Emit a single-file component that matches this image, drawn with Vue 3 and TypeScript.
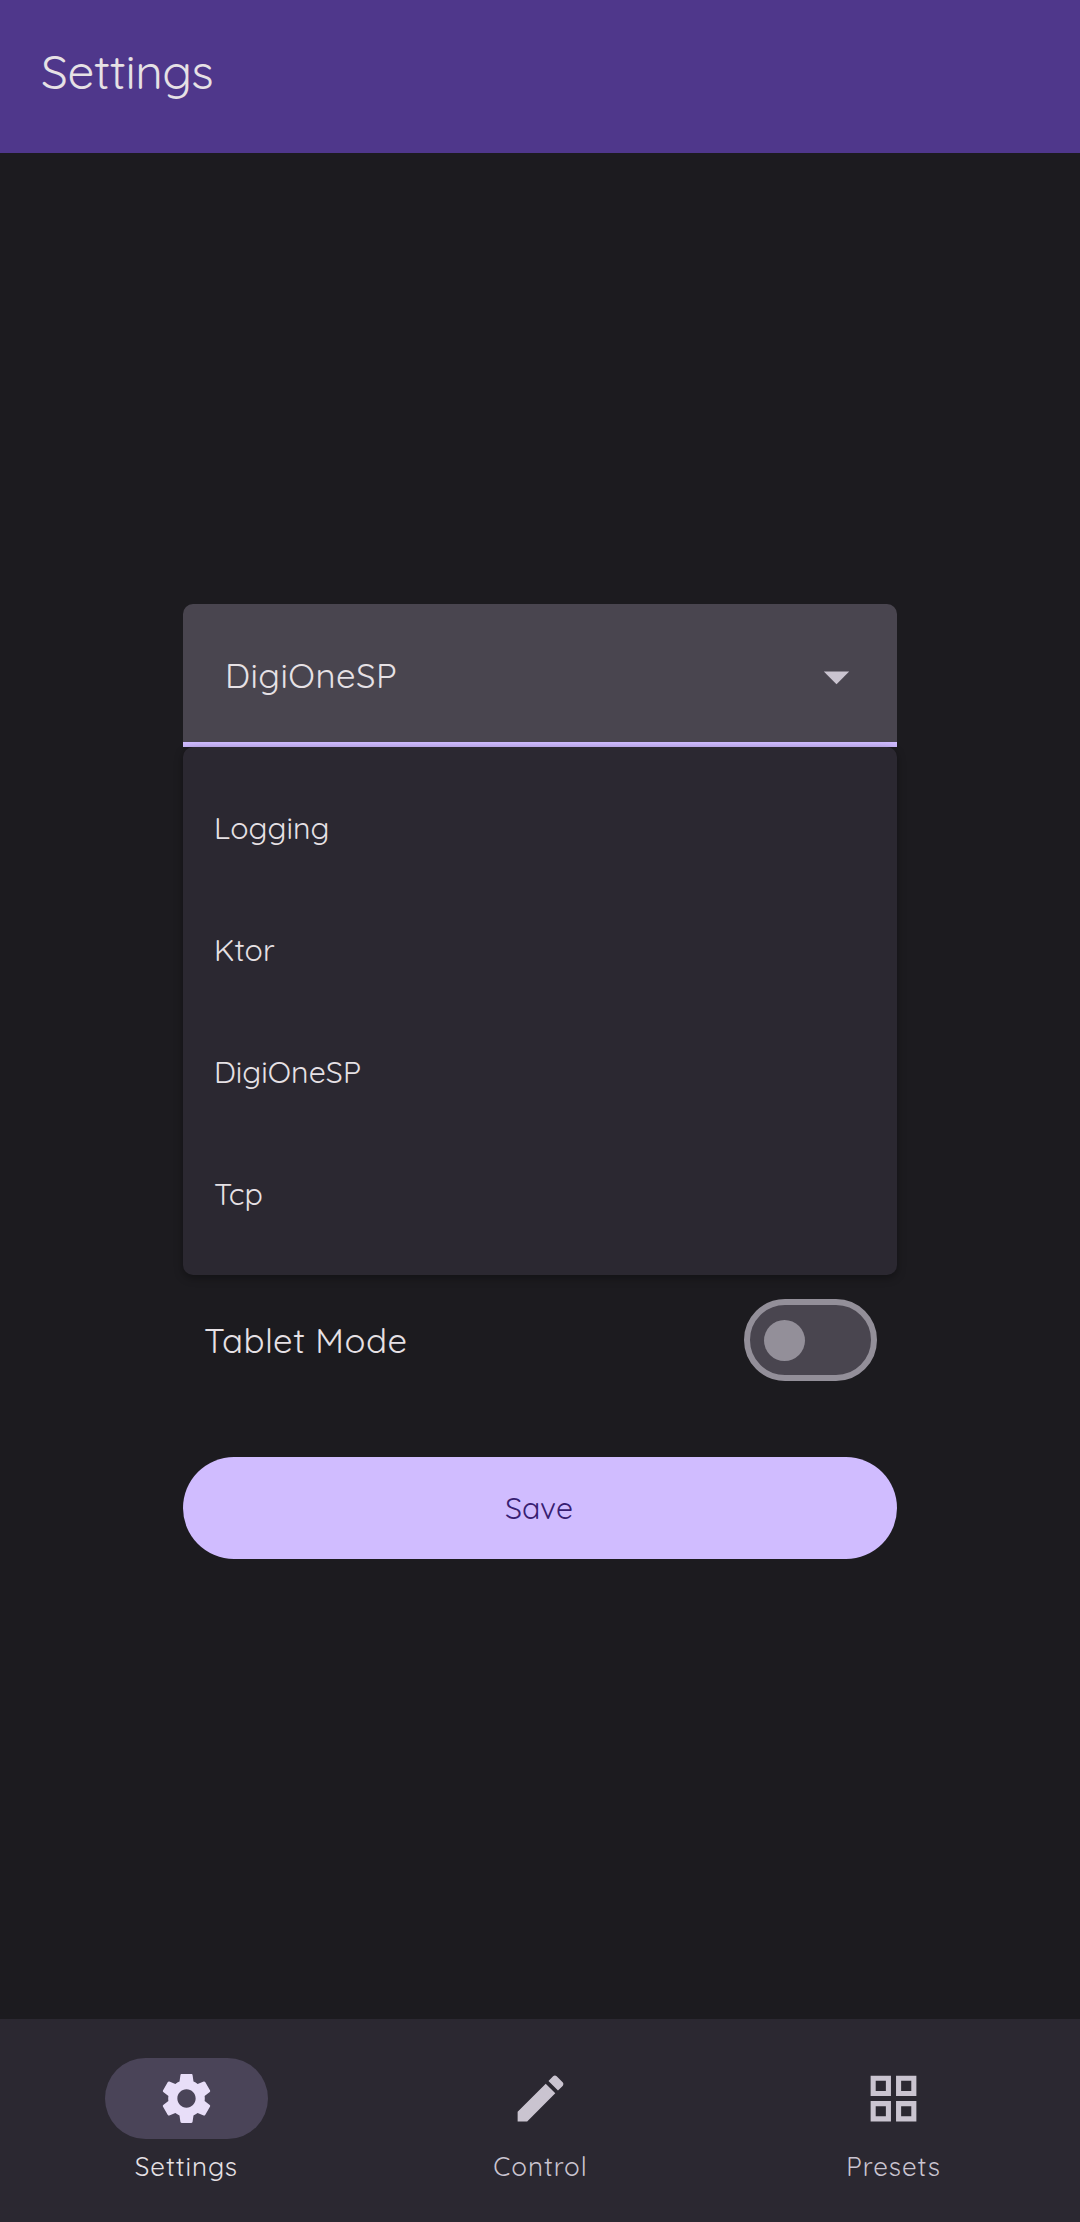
<script setup lang="ts">
interface Option {
  id: string
  label: string
}

interface Destination {
  id: string
  label: string
  icon: string
  active: boolean
}

const selected = 'DigiOneSP'

const options: Option[] = [
  { id: 'logging', label: 'Logging' },
  { id: 'ktor', label: 'Ktor' },
  { id: 'digi', label: 'DigiOneSP' },
  { id: 'tcp', label: 'Tcp' },
]

const destinations: Destination[] = [
  {
    id: 'settings',
    label: 'Settings',
    active: true,
    icon: 'M19.14 12.94c.04-.3.06-.61.06-.94 0-.32-.02-.64-.07-.94l2.03-1.58c.18-.14.23-.41.12-.61l-1.92-3.32c-.12-.22-.37-.29-.59-.22l-2.39.96c-.5-.38-1.03-.7-1.62-.94l-.36-2.54c-.04-.24-.24-.41-.48-.41h-3.84c-.24 0-.43.17-.47.41l-.36 2.54c-.59.24-1.13.57-1.62.94l-2.39-.96c-.22-.08-.47 0-.59.22L2.74 8.87c-.12.21-.08.47.12.61l2.03 1.58c-.05.3-.09.63-.09.94s.02.64.07.94l-2.03 1.58c-.18.14-.23.41-.12.61l1.92 3.32c.12.22.37.29.59.22l2.39-.96c.5.38 1.03.7 1.62.94l.36 2.54c.05.24.24.41.48.41h3.84c.24 0 .44-.17.47-.41l.36-2.54c.59-.24 1.13-.56 1.62-.94l2.39.96c.22.08.47 0 .59-.22l1.92-3.32c.12-.22.07-.47-.12-.61l-2.01-1.58zM12 15.6c-1.98 0-3.6-1.62-3.6-3.6s1.62-3.6 3.6-3.6 3.6 1.62 3.6 3.6-1.62 3.6-3.6 3.6z',
  },
  {
    id: 'control',
    label: 'Control',
    active: false,
    icon: 'M3 17.25V21h3.75L17.81 9.94l-3.75-3.75L3 17.25zM20.71 7.04c.39-.39.39-1.02 0-1.41l-2.34-2.34c-.39-.39-1.02-.39-1.41 0l-1.83 1.83 3.75 3.75 1.83-1.83z',
  },
  {
    id: 'presets',
    label: 'Presets',
    active: false,
    icon: 'M3 3v8h8V3H3zm6 6H5V5h4v4zm-6 4v8h8v-8H3zm6 6H5v-4h4v4zm4-16v8h8V3h-8zm6 6h-4V5h4v4zm-6 4v8h8v-8h-8zm6 6h-4v-4h4v4z',
  },
]
</script>

<template>
  <div class="screen">
    <header class="top-bar">
      <h1 class="title">Settings</h1>
    </header>

    <main class="content">
      <div class="field">
        <span class="field-text">{{ selected }}</span>
        <svg class="icon" viewBox="0 0 24 24"><path d="M7 10l5 5 5-5z" /></svg>
      </div>
      <ul class="menu">
        <li v-for="o in options" :key="o.id" class="option">
          <span class="option-text">{{ o.label }}</span>
        </li>
      </ul>
      <div class="toggle-row">
        <span class="toggle-label">Tablet Mode</span>
        <span class="switch"><span class="thumb"></span></span>
      </div>
      <button class="save" type="button"><span class="save-text">Save</span></button>
    </main>

    <nav class="nav">
      <div v-for="d in destinations" :key="d.id" :class="['dest', { active: d.active }]">
        <span class="pill">
          <svg class="icon" viewBox="0 0 24 24"><path :d="d.icon" /></svg>
        </span>
        <span class="dest-label">{{ d.label }}</span>
      </div>
    </nav>
  </div>
</template>

<style>
body {
  margin: 0;
  background: #1c1b1f;
}
</style>

<style scoped>
.screen {
  width: 1080px;
  height: 2222px;
  display: flex;
  flex-direction: column;
  background: #1c1b1f;
  color: #e6e1e5;
  font-family: Quicksand, Lato, sans-serif;
  font-weight: 400;
  overflow: hidden;
  white-space: nowrap;
}

.top-bar {
  height: 153px;
  flex: none;
  box-sizing: border-box;
  padding: 41px 0 0 41px;
  background: #4f378b;
}

.title {
  margin: 0;
  font-size: 47.7px;
  line-height: 60px;
  font-weight: 400;
  letter-spacing: -0.42px;
}

.content {
  flex: 1;
  display: flex;
  flex-direction: column;
  padding: 451px 183px 0;
}

.field {
  height: 143px;
  box-sizing: border-box;
  display: flex;
  align-items: center;
  justify-content: space-between;
  padding: 0 30px 0 42px;
  border-radius: 10px 10px 0 0;
  background: linear-gradient(#d0bcff, #c6b2f6) bottom / 100% 5px no-repeat, #49454f;
}

.field-text,
.toggle-label {
  font-size: 34.7px;
  line-height: 44px;
  letter-spacing: 0.48px;
}

.field-text {
  margin-bottom: 2px;
}

.icon {
  width: 61px;
  height: 61px;
  display: block;
  fill: #cac4d0;
}

.field .icon {
  margin-top: 1px;
}

.menu {
  height: 528px;
  box-sizing: border-box;
  margin: 0;
  padding: 20px 0 0 31px;
  list-style: none;
  border-radius: 10px;
  background: #2b2831;
  box-shadow: 0 3px 8px rgba(0, 0, 0, 0.35);
}

.option {
  height: 122px;
  display: flex;
  align-items: center;
}

.option-text,
.save-text {
  font-size: 30.3px;
  line-height: 40px;
  letter-spacing: 0.05px;
}

.toggle-row {
  height: 82px;
  margin-top: 24px;
  padding: 0 20px 0 21px;
  display: flex;
  align-items: center;
  justify-content: space-between;
}

.switch {
  width: 133px;
  height: 82px;
  box-sizing: border-box;
  display: flex;
  align-items: center;
  padding-left: 14px;
  border: 6px solid #938f99;
  border-radius: 41px;
  background: #49454f;
}

.thumb {
  width: 41px;
  height: 41px;
  border-radius: 50%;
  background: #938f99;
}

.save {
  height: 102px;
  margin: 76px 0 0;
  padding: 0 2px 0 0;
  border: 0;
  border-radius: 51px;
  background: #d0bcff;
  color: #381e72;
  font: inherit;
}

.nav {
  height: 203px;
  flex: none;
  box-sizing: border-box;
  display: flex;
  gap: 20px;
  padding-top: 39px;
  background: #2b2831;
  color: #cac4d0;
}

.dest {
  width: 346.67px;
  flex: none;
  box-sizing: border-box;
  display: flex;
  flex-direction: column;
  align-items: center;
}

.dest:first-child {
  padding-left: 26px;
}

.dest:nth-child(2) {
  padding-left: 1px;
}

.dest:last-child {
  padding-right: 26px;
}

.pill {
  width: 163px;
  height: 81px;
  display: flex;
  align-items: center;
  justify-content: center;
  border-radius: 41px;
}

.active {
  color: #e6e1e5;
}

.active .pill {
  background: #4a4458;
}

.active .icon {
  fill: #e8def8;
}

.dest-label {
  margin-top: 10px;
  font-size: 26px;
  line-height: 36px;
  letter-spacing: 0.95px;
}
</style>
